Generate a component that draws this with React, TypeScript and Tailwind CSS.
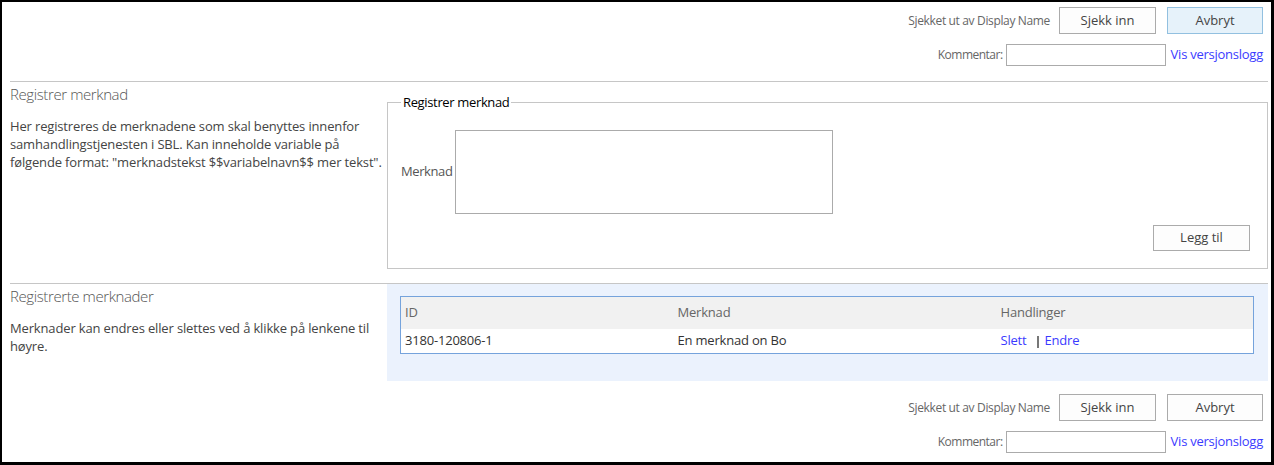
import React from "react";

const font = { fontFamily: '"Segoe UI", "Open Sans", "Noto Sans", sans-serif' };

function Actions({ top }: { top: boolean }) {
  return (
    <div className="flex flex-col items-end pr-[8px]">
      <div className="flex items-center h-[27px]">
        <span className="text-[12px] tracking-[-0.35px] text-[#666] mr-[9px]">Sjekket ut av Display Name</span>
        <button className="w-[97px] h-[27px] border border-[#ababab] bg-[#fdfdfd] text-[13px] text-[#444]">Sjekk inn</button>
        <button
          className={
            top
              ? "ml-[11px] w-[96px] h-[27px] border border-[#92c0e0] bg-[#e6f2fa] text-[13px] text-[#444]"
              : "ml-[11px] w-[96px] h-[27px] border border-[#ababab] bg-[#fdfdfd] text-[13px] text-[#444]"
          }
        >
          Avbryt
        </button>
      </div>
      <div className="flex items-center mt-[10px] h-[22px]">
        <span className="text-[12px] tracking-[-0.5px] text-[#666] mr-[3px]">Kommentar:</span>
        <input className="w-[160px] h-[22px] border border-[#ababab] bg-white outline-none" />
        <a className="ml-[5px] text-[13px] tracking-[-0.25px] text-[#3b3bff] cursor-pointer">Vis versjonslogg</a>
      </div>
    </div>
  );
}

export default function App() {
  return (
    <div
      style={font}
      className="w-[1274px] h-[465px] bg-white border-l-2 border-t-2 border-r-[3px] border-b-[3px] border-black box-border overflow-hidden"
    >
      <div className="pt-[5px]">
        <Actions top />
      </div>
      <div className="ml-[8px] mr-[3px] mt-[15px] border-t border-[#c6c6c6]" />

      {/* Section 1 */}
      <div className="grid grid-cols-[377px_1fr] pl-[8px] pr-[3px]">
        <div>
          <div className="pt-[1px] text-[15px] leading-[22px] tracking-[-0.4px] font-light text-[#555]">Registrer merknad</div>
          <p className="mt-[12px] text-[13px] leading-[18px] tracking-[-0.15px] text-[#444]">
            Her registreres de merknadene som skal benyttes innenfor samhandlingstjenesten i SBL. Kan inneholde variable på følgende format: "merknadstekst $$variabelnavn$$ mer tekst".
          </p>
        </div>
        <fieldset className="mt-[11px] border border-[#c6c6c6] pl-[13px] pr-[17px] pb-[17px]">
          <legend className="px-[2px] text-[13px] leading-[18px] tracking-[-0.35px] text-black">Registrer merknad</legend>
          <div className="flex items-center mt-[19px]">
            <span className="text-[13px] tracking-[-0.4px] text-[#555] w-[54px] shrink-0">Merknad</span>
            <textarea className="w-[378px] h-[84px] border border-[#ababab] bg-white resize-none outline-none" />
          </div>
          <div className="flex justify-end mt-[11px]">
            <button className="w-[97px] h-[26px] border border-[#ababab] bg-[#fdfdfd] text-[13px] text-[#444]">Legg til</button>
          </div>
        </fieldset>
      </div>

      <div className="ml-[8px] mr-[3px] mt-[14px] border-t border-[#c6c6c6]" />

      {/* Section 2 */}
      <div className="grid grid-cols-[377px_1fr] pl-[8px] pr-[3px]">
        <div>
          <div className="pt-[1px] text-[15px] leading-[22px] tracking-[-0.4px] font-light text-[#555]">Registrerte merknader</div>
          <p className="mt-[12px] text-[13px] leading-[18px] tracking-[-0.15px] text-[#444]">
            Merknader kan endres eller slettes ved å klikke på lenkene til høyre.
          </p>
        </div>
        <div className="bg-[#ebf2fd] pt-[12px] pl-[13px] pr-[14px] pb-[27px]">
          <table className="w-full border border-[#75a3dc] border-collapse bg-white text-[13px] tracking-[-0.2px]">
            <thead>
              <tr className="bg-[#f1f1f1] h-[32px]">
                <th className="w-[273px] text-left font-normal text-[#666] px-[4px]">ID</th>
                <th className="w-[323px] text-left font-normal text-[#666] px-[4px]">Merknad</th>
                <th className="text-left font-normal text-[#666] px-[4px]">Handlinger</th>
              </tr>
            </thead>
            <tbody>
              <tr className="h-[25px]">
                <td className="px-[4px] text-[#333]">3180-120806-1</td>
                <td className="px-[4px] text-[#333]">En merknad on Bo</td>
                <td className="px-[4px]">
                  <a className="text-[#3b3bff] cursor-pointer">Slett</a>
                  <span className="inline-block ml-[11px] mr-[5px] w-[2px] h-[12px] bg-[#777] align-[-3px]" />
                  <a className="text-[#3b3bff] cursor-pointer">Endre</a>
                </td>
              </tr>
            </tbody>
          </table>
        </div>
      </div>

      <div className="pt-[13px]">
        <Actions top={false} />
      </div>
    </div>
  );
}
